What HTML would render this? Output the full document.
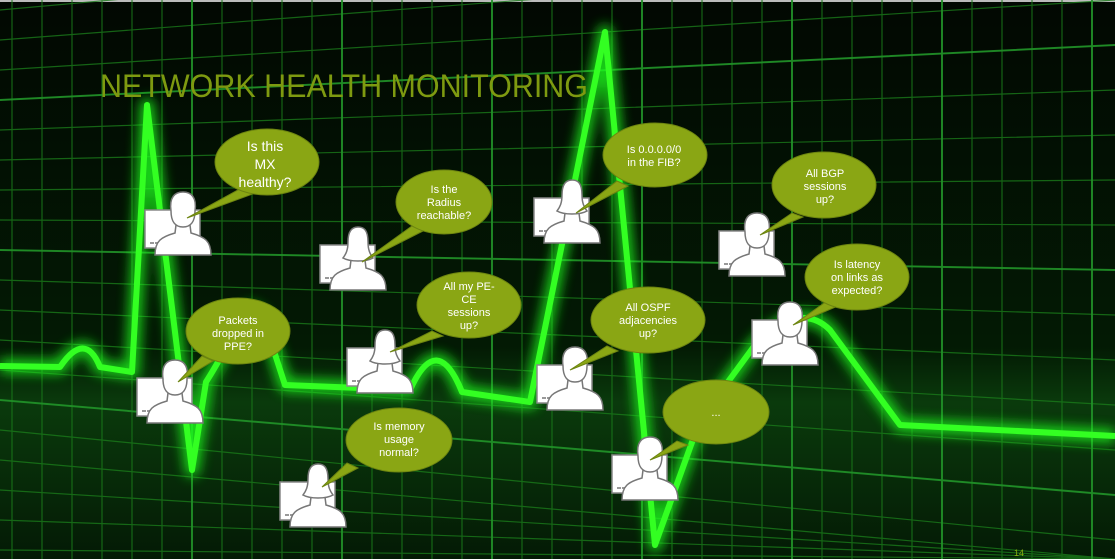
<!DOCTYPE html>
<html><head><meta charset="utf-8"><style>
html,body{margin:0;padding:0;background:#000;width:1115px;height:559px;overflow:hidden;}
svg{display:block;}
text{font-family:"Liberation Sans",sans-serif;}
</style></head><body>
<svg width="1115" height="559" viewBox="0 0 1115 559" xmlns="http://www.w3.org/2000/svg" overflow="hidden">
<defs>
<linearGradient id="bg" x1="0" y1="0" x2="0" y2="1">
<stop offset="0" stop-color="#020802"/><stop offset="0.62" stop-color="#031a04"/><stop offset="0.72" stop-color="#0a3a0c"/><stop offset="1" stop-color="#041a05"/>
</linearGradient>
<filter id="glow" x="-20%" y="-20%" width="140%" height="140%"><feGaussianBlur stdDeviation="6"/></filter>
<g id="pf">
<rect x="-38" y="-45" width="55" height="38" fill="#fff" stroke="#888" stroke-width="1.5"/>
<rect x="-33" y="-13" width="4" height="2" fill="#999"/><rect x="-28" y="-13" width="4" height="2" fill="#999"/>
<path d="M-28 0 C-28 -14 -22 -18 -8 -22 L-7 -30 L7 -30 L8 -22 C22 -18 28 -14 28 0 Z" fill="#fff" stroke="#777" stroke-width="1.5"/>
<path d="M-12 -44 C-14 -58 -8 -63 0 -63 C8 -63 14 -58 12 -44 C12 -34 8 -28 0 -28 C-8 -28 -12 -34 -12 -44 Z" fill="#fff" stroke="#777" stroke-width="1.5"/>
</g>
<g id="pfw">
<rect x="-38" y="-45" width="55" height="38" fill="#fff" stroke="#888" stroke-width="1.5"/>
<rect x="-33" y="-13" width="4" height="2" fill="#999"/><rect x="-28" y="-13" width="4" height="2" fill="#999"/>
<path d="M-28 0 C-28 -14 -22 -18 -8 -22 L-7 -30 L7 -30 L8 -22 C22 -18 28 -14 28 0 Z" fill="#fff" stroke="#777" stroke-width="1.5"/>
<path d="M-10 -48 C-10 -60 -5 -63 0 -63 C6 -63 10 -60 10 -48 C10 -40 12 -36 15 -32 C8 -28 -8 -28 -15 -32 C-12 -36 -10 -40 -10 -48 Z" fill="#fff" stroke="#777" stroke-width="1.5"/>
</g>
</defs>
<rect width="1115" height="559" fill="url(#bg)"/>
<rect width="1115" height="2" fill="#bbb"/>
<g stroke="#1a7a1a" stroke-width="1.2" opacity="0.8">
<path d="M12 0V559M42 0V559M72 0V559M102 0V559M132 0V559M162 0V559M192 0V559M222 0V559M252 0V559M282 0V559M312 0V559M342 0V559M372 0V559M402 0V559M432 0V559M462 0V559M492 0V559M522 0V559M552 0V559M582 0V559M612 0V559M642 0V559M672 0V559M702 0V559M732 0V559M762 0V559M792 0V559M822 0V559M852 0V559M882 0V559M912 0V559M942 0V559M972 0V559M1002 0V559M1032 0V559M1062 0V559M1092 0V559"/>
<path d="M0 10L1115 -90M0 40L1115 -45M0 70L1115 0M0 100L1115 45M0 130L1115 90M0 160L1115 135M0 190L1115 180M0 220L1115 225M0 250L1115 270M0 280L1115 315M0 310L1115 360M0 340L1115 405M0 370L1115 450M0 400L1115 495M0 430L1115 540M0 460L1115 559M0 490L1115 559M0 520L1115 559M0 550L1115 559"/>
</g>
<g stroke="#22952a" stroke-width="2" opacity="0.8">
<path d="M192 0V559M342 0V559M492 0V559M642 0V559M792 0V559M942 0V559M1092 0V559"/>
<path d="M0 100L1115 45M0 250L1115 270M0 400L1115 495"/>
</g>
<path d="M0 366 L60 367 Q85 330 100 367 L132 372 L147 105 L192 470 L206 382 Q220 360 235 330 Q255 285 272 345 L285 385 L410 390 Q437 330 462 392 L530 402 L605 32 L655 545 L700 420 L755 345 Q800 300 830 330 L900 425 L1115 436" fill="none" stroke="#1aff1a" stroke-width="14" filter="url(#glow)" opacity="0.8" stroke-linejoin="round"/>
<path d="M0 366 L60 367 Q85 330 100 367 L132 372 L147 105 L192 470 L206 382 Q220 360 235 330 Q255 285 272 345 L285 385 L410 390 Q437 330 462 392 L530 402 L605 32 L655 545 L700 420 L755 345 Q800 300 830 330 L900 425 L1115 436" fill="none" stroke="#33ff22" stroke-width="6" stroke-linejoin="round"/>
<text x="100" y="97" font-size="32" fill="#7e9a10" textLength="488" lengthAdjust="spacingAndGlyphs">NETWORK HEALTH MONITORING</text>
<text x="1014" y="556" font-size="9" fill="#8ab010">14</text>
<g>
<use href="#pf" x="183" y="255"/>
<use href="#pfw" x="358" y="290"/>
<use href="#pfw" x="572" y="243"/>
<use href="#pf" x="757" y="276"/>
<use href="#pf" x="790" y="365"/>
<use href="#pf" x="175" y="423"/>
<use href="#pfw" x="385" y="393"/>
<use href="#pf" x="575" y="410"/>
<use href="#pfw" x="318" y="527"/>
<use href="#pf" x="650" y="500"/>
</g>
<g fill="#8aa614" stroke="#6c8410" stroke-width="1">
<path d="M187 218 L245 186 L258 192 Z"/><ellipse cx="267" cy="162" rx="52" ry="33"/>
<path d="M362 262 L412 226 L423 231 Z"/><ellipse cx="444" cy="202" rx="48" ry="32"/>
<path d="M576 213 L617 181 L628 186 Z"/><ellipse cx="655" cy="155" rx="52" ry="32"/>
<path d="M760 235 L792 213 L803 217 Z"/><ellipse cx="824" cy="185" rx="52" ry="33"/>
<path d="M793 325 L827 301 L838 306 Z"/><ellipse cx="857" cy="277" rx="52" ry="33"/>
<path d="M178 382 L202 356 L213 361 Z"/><ellipse cx="238" cy="331" rx="52" ry="33"/>
<path d="M390 352 L432 331 L443 336 Z"/><ellipse cx="469" cy="305" rx="52" ry="33"/>
<path d="M570 370 L607 346 L618 351 Z"/><ellipse cx="648" cy="320" rx="57" ry="33"/>
<path d="M322 487 L347 463 L358 468 Z"/><ellipse cx="399" cy="440" rx="53" ry="32"/>
<path d="M650 460 L677 441 L688 445 Z"/><ellipse cx="716" cy="412" rx="53" ry="32"/>
</g>
<g fill="#fff" text-anchor="middle" font-size="11">
<text x="265" y="151" font-size="14">Is this</text><text x="265" y="169" font-size="14">MX</text><text x="265" y="187" font-size="14">healthy?</text>
<text x="444" y="193">Is the</text><text x="444" y="206">Radius</text><text x="444" y="219">reachable?</text>
<text x="654" y="153">Is 0.0.0.0/0</text><text x="654" y="166">in the FIB?</text>
<text x="825" y="177">All  BGP</text><text x="825" y="190">sessions</text><text x="825" y="203">up?</text>
<text x="857" y="268">Is latency</text><text x="857" y="281">on links as</text><text x="857" y="294">expected?</text>
<text x="238" y="324">Packets</text><text x="238" y="337">dropped in</text><text x="238" y="350">PPE?</text>
<text x="469" y="290">All my PE-</text><text x="469" y="303">CE</text><text x="469" y="316">sessions</text><text x="469" y="329">up?</text>
<text x="648" y="311">All  OSPF</text><text x="648" y="324">adjacencies</text><text x="648" y="337">up?</text>
<text x="399" y="430">Is memory</text><text x="399" y="443">usage</text><text x="399" y="456">normal?</text>
<text x="716" y="416">...</text>
</g>
</svg>
</body></html>
